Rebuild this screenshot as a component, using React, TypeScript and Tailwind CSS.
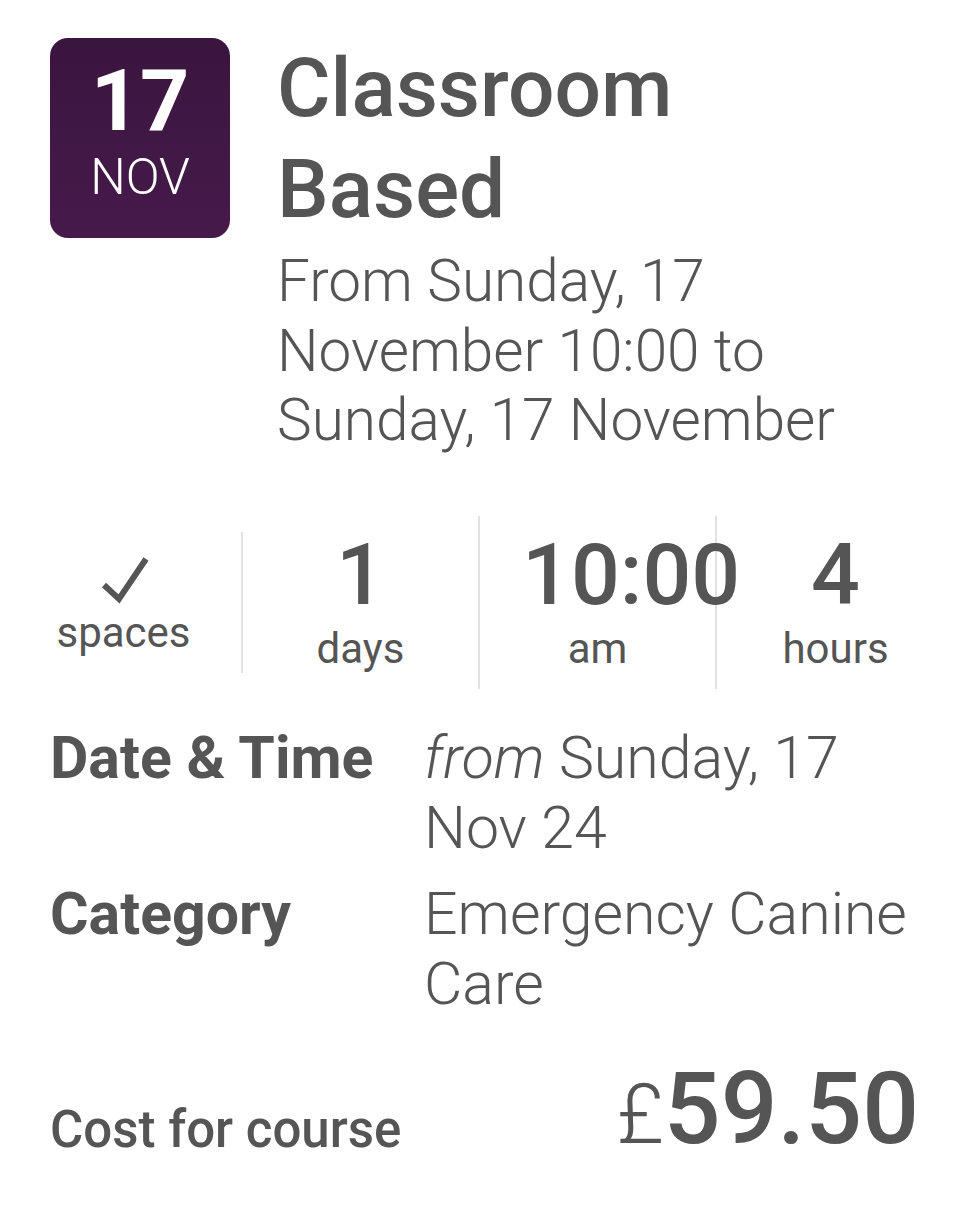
import React from "react";

function Check() {
  return (
    <svg width="60" height="61" viewBox="0 0 60 61" className="block mx-auto">
      <polyline points="10,37 25,51 52,11" fill="none" stroke="#555555" strokeWidth="6" strokeLinejoin="miter" strokeLinecap="butt" />
    </svg>
  );
}

export default function App() {
  return (
    <div className="min-h-screen bg-white font-['Roboto',_'Liberation_Sans',_sans-serif] text-[#555555]">
      <div className="pl-[50px] pr-[50px] pt-[38px] pb-[40px]">
        {/* Header */}
        <div className="flex items-start">
          <div className="w-[180px] h-[200px] shrink-0 rounded-[18px] bg-linear-to-b from-[#3a153f] to-[#461a4b] flex flex-col items-center pt-[20px] text-white">
            <div className="text-[86px] leading-[86px] font-bold">17</div>
            <div className="mt-[8px] text-[50px] leading-[50px] font-light">NOV</div>
          </div>
          <div className="ml-[47px] min-w-0">
            <h1 className="text-[82px] leading-[101px] font-medium">Classroom Based</h1>
            <p className="mt-[7px] text-[58.5px] leading-[69.5px] font-light">
              From Sunday, 17 November 10:00 to Sunday, 17 November
            </p>
          </div>
        </div>

        {/* Stats */}
        <div className="mt-[60px] ml-[-44px] w-[948px] grid grid-cols-4 items-center">
          <div className="min-w-0 border-r-2 border-[#e2e2e2] py-[16px] px-[40px] text-center">
            <Check />
            <div className="text-[42px] leading-[48px]">spaces</div>
          </div>
          <div className="min-w-0 border-r-2 border-[#e2e2e2] py-[16px] px-[42px] text-center">
            <div className="text-[86px] leading-[86px] font-medium whitespace-nowrap">1</div>
            <div className="mt-[7px] text-[42px] leading-[48px]">days</div>
          </div>
          <div className="min-w-0 border-r-2 border-[#e2e2e2] py-[16px] px-[42px] text-center">
            <div className="text-[86px] leading-[86px] font-medium whitespace-nowrap">10:00</div>
            <div className="mt-[7px] text-[42px] leading-[48px]">am</div>
          </div>
          <div className="min-w-0 py-[16px] px-[42px] text-center">
            <div className="text-[86px] leading-[86px] font-medium whitespace-nowrap">4</div>
            <div className="mt-[7px] text-[42px] leading-[48px]">hours</div>
          </div>
        </div>

        {/* Details */}
        <div className="mt-[34px] grid grid-cols-[374px_1fr] gap-y-[16px] text-[59px] leading-[70px]">
          <div className="font-bold">Date &amp; Time</div>
          <div className="font-light">
            <span className="italic">from</span> Sunday, 17 Nov 24
          </div>
          <div className="font-bold">Category</div>
          <div className="font-light">Emergency Canine Care</div>
        </div>

        {/* Cost */}
        <div className="mt-[40px] flex items-end justify-between">
          <div className="text-[51px] leading-[59px] font-medium">Cost for course</div>
          <div className="text-[100px] leading-[100px] font-medium whitespace-nowrap">
            <span className="text-[83px] leading-none font-light">£</span>
            <span>59.50</span>
          </div>
        </div>
      </div>
    </div>
  );
}
